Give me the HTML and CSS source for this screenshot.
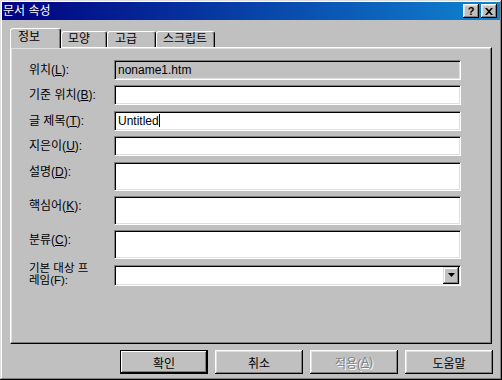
FILE: index.html
```html
<html>
<head>
	<meta charset="utf-8">
	<link rel="stylesheet" href="styles.css">
</head>

<body>
	<div class="window">
		<div class="titlebar">
			<span class="title">문서 속성</span>
			<div class="title-buttons">
				<div class="tb-btn help">?</div>
				<div class="tb-btn close">
					<svg width="8" height="7" viewBox="0 0 8 7">
						<path d="M0 0h2l2 2.2L6 0h2L5 3.5 8 7H6L4 4.8 2 7H0l3-3.5z" fill="#000"/>
					</svg>
				</div>
			</div>
		</div>

		<div class="dialog">
			<div class="tabs">
				<div class="tab active tab-info">정보</div>
				<div class="tab tab-look">모양</div>
				<div class="tab tab-adv">고급</div>
				<div class="tab tab-script">스크립트</div>
			</div>

			<div class="panel">
				<div class="form">
					<div class="label">위치(<u>L</u>):</div>
					<div class="field disabled">noname1.htm</div>

					<div class="label">기준 위치(<u>B</u>):</div>
					<div class="field"></div>

					<div class="label">글 제목(<u>T</u>):</div>
					<div class="field">Untitled<span class="caret"></span></div>

					<div class="label">지은이(<u>U</u>):</div>
					<div class="field"></div>

					<div class="label">설명(<u>D</u>):</div>
					<div class="field tall"></div>

					<div class="label">핵심어(<u>K</u>):</div>
					<div class="field tall"></div>

					<div class="label">분류(<u>C</u>):</div>
					<div class="field tall"></div>

					<div class="label two-line">
						<span class="line">기본 대상 프</span>
						<span class="line">레임(F):</span>
					</div>
					<div class="field select">
						<div class="drop-btn">
							<svg width="7" height="4" viewBox="0 0 7 4">
								<path d="M0 0h7L3.5 4z" fill="#000"/>
							</svg>
						</div>
					</div>
				</div>
			</div>

			<div class="buttons">
				<div class="btn default">확인</div>
				<div class="btn">취소</div>
				<div class="btn disabled">적용(<u>A</u>)</div>
				<div class="btn">도움말</div>
			</div>
		</div>
	</div>
</body>

</html>
```

FILE: styles.css
```css
body {
	margin: 0;
	padding: 0;
	font-family: "Liberation Sans", "Noto Sans CJK KR", sans-serif;
	font-size: 12px;
	overflow: hidden;
}

.window {
	width: 502px;
	height: 380px;
	box-sizing: border-box;
	padding: 2px;
	background: #c0c0c0;
	box-shadow: inset -1px -1px #000, inset 1px 1px #dfdfdf,
		inset -2px -2px #808080, inset 2px 2px #fff;
}

/* title bar */
.titlebar {
	height: 18px;
	display: flex;
	align-items: center;
	justify-content: space-between;
	padding: 0 3px 0 1px;
	background: linear-gradient(to right, #000080, #1084d0);
	color: #fff;
}

.title {
	font-size: 12px;
	line-height: 14px;
}

.title-buttons {
	display: flex;
	gap: 2px;
}

.tb-btn {
	width: 16px;
	height: 14px;
	box-sizing: border-box;
	display: flex;
	align-items: center;
	justify-content: center;
	background: #c0c0c0;
	color: #000;
	box-shadow: inset -1px -1px #000, inset 1px 1px #fff,
		inset -2px -2px #808080, inset 2px 2px #dfdfdf;
}

.tb-btn.help {
	font-weight: bold;
	font-size: 11px;
	line-height: 12px;
}

/* dialog body */
.dialog {
	padding: 0 8px;
}

.tabs {
	display: flex;
	align-items: flex-end;
	height: 19px;
	margin-top: 8px;
	position: relative;
	z-index: 1;
}

.tab {
	height: 16px;
	box-sizing: border-box;
	padding: 1px 0 0 6px;
	line-height: 13px;
	background: #c0c0c0;
	border-top: 1px solid #fff;
	border-left: 1px solid #fff;
	border-right: 1px solid #000;
	border-radius: 3px 3px 0 0;
	box-shadow: inset -1px 0 #808080;
}

.tab.active {
	height: 20px;
	margin-bottom: -1px;
	padding-top: 2px;
	padding-left: 7px;
}

.tab-info { width: 51px; }
.tab-look { width: 46px; }
.tab-adv { width: 49px; padding-left: 7px; }
.tab-script { width: 59px; }

.panel {
	height: 297px;
	box-sizing: border-box;
	padding: 12px 0 0 18px;
	border-top: 1px solid #fff;
	border-left: 1px solid #fff;
	border-right: 1px solid #000;
	border-bottom: 1px solid #000;
	box-shadow: inset -1px -1px #808080, inset 1px 1px #dfdfdf;
}

.form {
	display: grid;
	grid-template-columns: 85px 347px;
	row-gap: 5.4px;
}

.label {
	padding-top: 3px;
	line-height: 14px;
}

.label.two-line {
	padding-top: 0;
	margin-top: -3px;
}

.line {
	display: block;
	height: 12px;
	line-height: 13px;
	font-size: 11.5px;
}

.field {
	height: 20px;
	box-sizing: border-box;
	padding: 1px 3px;
	line-height: 16px;
	background: #fff;
	border: 1px solid;
	border-color: #808080 #fff #fff #808080;
	box-shadow: inset 1px 1px #000, inset -1px -1px #dfdfdf;
}

.field.disabled {
	background: #c0c0c0;
}

.field.tall {
	height: 29px;
}

.field.select {
	height: 21px;
	padding: 1px;
	display: flex;
	justify-content: flex-end;
}

.caret {
	display: inline-block;
	width: 1px;
	height: 13px;
	background: #000;
	vertical-align: -2px;
}

.drop-btn {
	width: 16px;
	height: 17px;
	box-sizing: border-box;
	display: flex;
	align-items: center;
	justify-content: center;
	background: #c0c0c0;
	box-shadow: inset -1px -1px #000, inset 1px 1px #dfdfdf,
		inset -2px -2px #808080, inset 2px 2px #fff;
}

/* bottom buttons */
.buttons {
	display: flex;
	justify-content: flex-end;
	gap: 7px;
	margin-top: 6px;
	margin-right: -1px;
}

.btn {
	width: 88px;
	height: 24px;
	box-sizing: border-box;
	display: flex;
	align-items: center;
	justify-content: center;
	background: #c0c0c0;
	box-shadow: inset -1px -1px #000, inset 1px 1px #fff,
		inset -2px -2px #808080, inset 2px 2px #dfdfdf;
}

.btn.default {
	border: 1px solid #000;
	box-shadow: inset -1px -1px #000, inset 1px 1px #fff,
		inset -2px -2px #808080;
}

.btn.disabled {
	color: #808080;
	text-shadow: 1px 1px #fff;
}
```
